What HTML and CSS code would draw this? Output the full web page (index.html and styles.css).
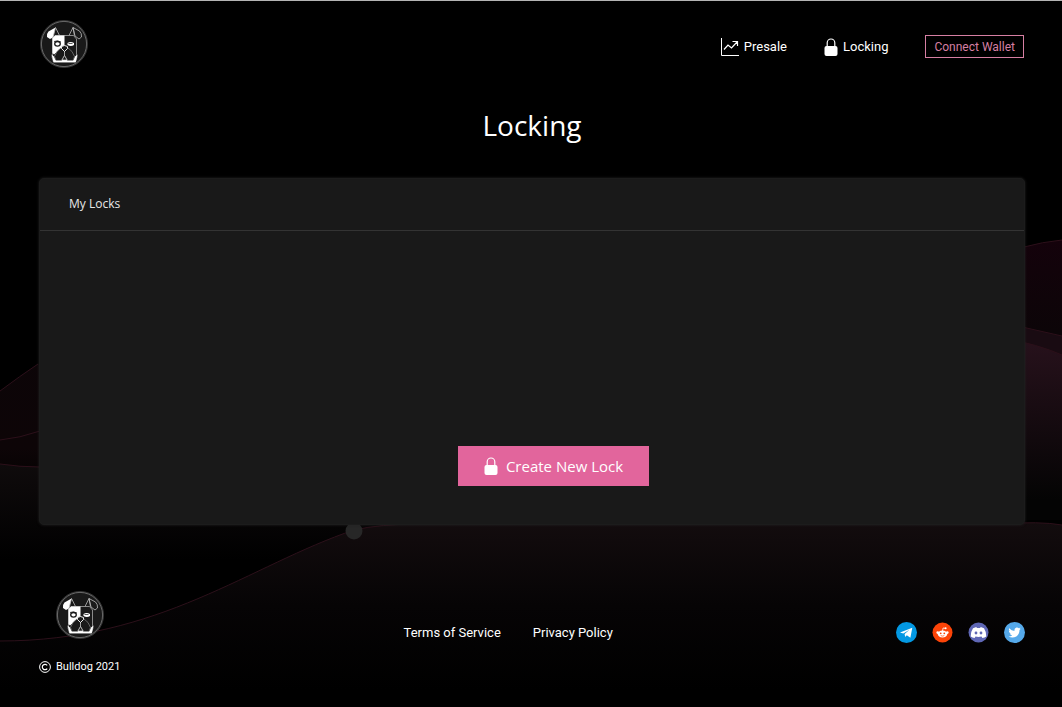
FILE: index.html
```html
<!DOCTYPE html>
<html lang="en">
<head>
  <meta charset="UTF-8">
  <meta name="viewport" content="width=device-width, initial-scale=1">
  <title>Bulldog - Locking</title>
  <link rel="stylesheet" href="styles.css">
</head>
<body>
<svg width="0" height="0" class="sprite" aria-hidden="true">
  <symbol id="bulldog" viewBox="0 0 48 48">
    <circle cx="24" cy="24" r="23.600" fill="#191919" stroke="#3c3c3c" stroke-width=".8"/>
    <circle cx="24" cy="24" r="22.600" fill="none" stroke="#a0a0a0" stroke-width=".6"/>
    <!-- ears -->
    <path d="M15.500 7.500 8.500 11.500Q6.500 13.500 7 17l3 2 3-1.500z" fill="#fff"/>
    <path d="M15.500 7.500 19.500 15.500M15.500 7.500 13 17.500" fill="none" stroke="#bbb" stroke-width=".8"/>
    <path d="M33 7.500 29 15.500M33 7.500l6.500 3.500q2.500 2.500 2 6l-2.500 2-4-3zM33 7.500l1.500 8" fill="none" stroke="#bbb" stroke-width=".8"/>
    <!-- head -->
    <path d="M15 15.500h18.500l3 3.500v15l.5 3-1.500 5h-22L12 37l.5-3V18z" fill="#191919" stroke="#bbb" stroke-width=".7"/>
    <path d="M15 15.500h9.500v10l-3 2-4.500 4.500-3 2.500-1.500-1.500V18z" fill="#fff"/>
    <path d="M11.500 34.500 14 36.500 15.500 40H22l2.500-1 2.500 1h6.500l1.500-3.500 2.500-2-.8 3.500-1 4.200H13.500L12.500 38z" fill="#fff"/>
    <!-- jowls and nose -->
    <path d="M21.500 27.500Q16 31 14.500 36.500l1.500 4h5.500l3-5 3 5h5.500l1.500-4Q33 31 27.500 27.500" fill="#191919" stroke="#999" stroke-width=".6"/>
    <path d="M24.500 31v4.500l-2.500 4.500h5l-2.500-4.500" fill="#191919" stroke="#ddd" stroke-width=".7"/>
    <path d="M21.500 26.500q3-2 6 0v2L24.500 31.500 21.500 28.500z" fill="#191919" stroke="#fff" stroke-width=".9"/>
    <!-- eyes -->
    <ellipse cx="17.500" cy="23.800" rx="2.800" ry="2.300" fill="#fff" stroke="#191919" stroke-width="1.300"/>
    <path d="M14 21.500q3.500-1.500 7 .5" fill="none" stroke="#191919" stroke-width=".8"/>
    <path d="M27.500 23q3-2 6.500 0v2q-3 2-6.500 0z" fill="#fff"/>
    <path d="M28.500 23.500h4" stroke="#191919" stroke-width=".7"/>
  </symbol>
  <symbol id="lock" viewBox="0 0 14 18">
    <path d="M3.200 9V4.800a3.800 3.800 0 0 1 7.600 0V9" fill="none" stroke="currentColor" stroke-width="1.200"/>
    <rect x=".5" y="8" width="13" height="10" rx="2" fill="currentColor"/>
  </symbol>
</svg>

<!-- chart waves behind the page -->
<svg class="waves" viewBox="0 0 1062 707" preserveAspectRatio="none" aria-hidden="true">
  <defs>
    <linearGradient id="far" gradientUnits="userSpaceOnUse" x1="0" y1="240" x2="0" y2="500">
      <stop offset="0" stop-color="#14020b"/>
      <stop offset=".35" stop-color="#0c0508"/>
      <stop offset=".8" stop-color="#0d0507"/>
      <stop offset="1" stop-color="#000"/>
    </linearGradient>
    <linearGradient id="right" gradientUnits="userSpaceOnUse" x1="0" y1="345" x2="0" y2="500">
      <stop offset="0" stop-color="#26111b"/>
      <stop offset="1" stop-color="#040404"/>
    </linearGradient>
    <linearGradient id="left" gradientUnits="userSpaceOnUse" x1="0" y1="464" x2="0" y2="560">
      <stop offset="0" stop-color="#0f0b0c"/>
      <stop offset="1" stop-color="#000"/>
    </linearGradient>
    <linearGradient id="near" gradientUnits="userSpaceOnUse" x1="0" y1="522" x2="0" y2="690">
      <stop offset="0" stop-color="#130c0e"/>
      <stop offset=".5" stop-color="#060405"/>
      <stop offset="1" stop-color="#000"/>
    </linearGradient>
  </defs>
  <path d="M0 391Q20 376 38 364C300 200 560 500 1024 247Q1042 242 1062 240V540H0z" fill="url(#far)"/>
  <path d="M0 391Q20 376 38 364M1024 247Q1042 242 1062 240" class="line"/>
  <path d="M1000 322 1062 336V500H1000z" fill="#190b12"/>
  <path d="M0 440Q20 438 40 431M1000 322 1062 336" class="line"/>
  <path d="M1000 337Q1040 345 1062 355V520H1000z" fill="url(#right)"/>
  <path d="M1000 337Q1040 345 1062 355" class="line"/>
  <path d="M0 464Q20 467 40 467H600V580H0z" fill="url(#left)"/>
  <path d="M0 464Q20 467 40 467" class="line"/>
  <path d="M0 641C160 641 250 565 354 530Q380 524 420 524H1000Q1040 521 1062 525V707H0z" fill="url(#near)"/>
  <path d="M0 641C160 641 250 565 354 530Q380 524 420 524H1000Q1040 521 1062 525" class="line"/>
  <circle cx="354" cy="531" r="8.500" fill="#272727"/>
</svg>

<div class="page">
  <header class="header">
    <a href="#" class="logo" aria-label="Bulldog"><svg><use href="#bulldog"/></svg></a>
    <nav class="nav">
      <a href="#">
        <svg class="chart-icon" viewBox="0 0 18 18" fill="none" stroke="currentColor"><path d="M.5 0v17.500H18" /><path d="m3 11.500 4-4.500 3.500 3L16 4M11.500 3.500H16.500V8" stroke-width="1.200"/></svg>
        Presale
      </a>
      <a href="#"><svg class="lock-icon"><use href="#lock"/></svg>Locking</a>
      <button type="button" class="connect">Connect Wallet</button>
    </nav>
  </header>

  <main>
    <h1>Locking</h1>
    <section class="card">
      <h2>My Locks</h2>
      <div class="card-body">
        <button type="button" class="create"><svg class="lock-icon"><use href="#lock"/></svg>Create New Lock</button>
      </div>
    </section>
  </main>

  <footer class="footer">
    <div class="brand">
      <a href="#" class="logo" aria-label="Bulldog"><svg><use href="#bulldog"/></svg></a>
      <p>
        <svg class="copy-icon" viewBox="0 0 12 12" fill="none" stroke="currentColor"><circle cx="6" cy="6" r="5.400"/><path d="M8.200 4.400a2.700 2.700 0 1 0 0 3.200" stroke-width="1.200"/></svg>
        Bulldog 2021
      </p>
    </div>
    <div class="links">
      <a href="#">Terms of Service</a>
      <a href="#">Privacy Policy</a>
    </div>
    <div class="social">
      <a href="#" aria-label="Telegram">
        <svg viewBox="0 0 21 21"><circle cx="10.500" cy="10.500" r="10.500" fill="#0398e3"/><path d="M4 10.400 16.300 5.800 14.400 15.800 10.800 13.200 9.200 15 8.600 12 13.500 7.700 7.300 11.600z" fill="#fff"/></svg>
      </a>
      <a href="#" aria-label="Reddit">
        <svg viewBox="0 0 21 21"><circle cx="10.500" cy="10.500" r="10" fill="#fc4408"/><g fill="#fff"><ellipse cx="10.500" cy="12" rx="4.800" ry="3.400"/><circle cx="5.700" cy="10.600" r="1.300"/><circle cx="15.300" cy="10.600" r="1.300"/><circle cx="13.600" cy="6.300" r="1"/></g><path d="m10.500 9 .6-3 2.400.4" fill="none" stroke="#fff" stroke-width=".8"/><circle cx="8.700" cy="11.300" r=".9" fill="#fc4408"/><circle cx="12.300" cy="11.300" r=".9" fill="#fc4408"/><path d="M8.700 13.600q1.800 1 3.600 0" fill="none" stroke="#fc4408" stroke-width=".7"/></svg>
      </a>
      <a href="#" aria-label="Discord">
        <svg viewBox="0 0 21 21"><circle cx="10.500" cy="10.500" r="10" fill="#5f67b5"/><path d="M5 6.200 8.300 5l.6 1h3.200l.6-1L16 6.200q2.600 4 2.300 8.200-1.700 1.400-3.900 1.700l-.9-1.500q-3 .8-6 0l-.9 1.500q-2.200-.3-3.900-1.700Q2.400 10.200 5 6.200z" fill="#fff"/><circle cx="8" cy="11" r="1.400" fill="#5f67b5"/><circle cx="13" cy="11" r="1.400" fill="#5f67b5"/></svg>
      </a>
      <a href="#" aria-label="Twitter">
        <svg viewBox="0 0 21 21"><circle cx="10.500" cy="10.500" r="10.500" fill="#55a9ea"/><path d="M5.200 6.200q2.300 2.600 5.300 2.700-.5-2.800 2-3.400 1.400-.2 2.300.7l1.700-.6-1 1.500 1.300-.3-1.300 1.300q0 4.200-3.200 6.400-3.800 2.200-7.800 0 2.300.1 3.700-1.200-1.900-.1-2.400-1.800h1.100q-2-.6-2.100-2.700l1.100.3Q4.300 7.800 5.200 6.200z" fill="#fff"/></svg>
      </a>
    </div>
  </footer>
</div>
</body>
</html>
```

FILE: styles.css
```css
* {
  margin: 0;
  padding: 0;
  box-sizing: border-box;
}
body {
  position: relative;
  min-height: 100vh;
  background: #000;
  border-top: 1px solid #b4b4b4;
  color: #fff;
  font-family: Roboto, "Liberation Sans", sans-serif;
  font-size: 13px;
  overflow-x: hidden;
}
a {
  color: #fff;
  text-decoration: none;
}
button {
  cursor: pointer;
}
svg {
  display: block;
}
.sprite {
  position: absolute;
}
.waves {
  position: absolute;
  top: -1px;
  left: 0;
  width: 100%;
  height: 100vh;
}
.line {
  fill: none;
  stroke: #2c101a;
}
.page {
  position: relative;
  padding: 19px 37px 34px 39px;
}

/* header */
.header {
  display: flex;
  justify-content: space-between;
  align-items: center;
  padding: 0 1px;
}
.logo svg {
  width: 48px;
  height: 48px;
}
.nav {
  display: flex;
  align-items: center;
  gap: 37px;
  padding-top: 5px;
}
.nav a {
  display: flex;
  align-items: center;
  gap: 5px;
}
.chart-icon {
  width: 18px;
  height: 18px;
}
.lock-icon {
  width: 14px;
  height: 18px;
}
.connect {
  height: 23px;
  padding: 0 8px;
  background: transparent;
  border: 1px solid #d67fa3;
  color: #d67fa3;
  font-family: inherit;
  font-size: 12px;
}

/* locks */
h1 {
  margin-top: 37px;
  font-family: "Open Sans", "Noto Sans", sans-serif;
  font-size: 28px;
  font-weight: 400;
  line-height: 40px;
  text-align: center;
}
.card {
  margin-top: 33px;
  background: #191919;
  border: 1px solid #1c1c1c;
  border-radius: 5px;
  box-shadow: 0 0 3px #222;
}
.card h2 {
  height: 52px;
  padding-left: 29px;
  border-bottom: 1px solid #333;
  font-family: "Open Sans", "Noto Sans", sans-serif;
  font-size: 12px;
  font-weight: 400;
  line-height: 50px;
  color: #e8e8e8;
}
.card-body {
  display: flex;
  justify-content: center;
  align-items: flex-end;
  height: 293px;
  padding: 0 0 38px 43px;
}
.create {
  display: flex;
  justify-content: center;
  align-items: center;
  gap: 8px;
  height: 40px;
  padding: 0 26px;
  background: #e2659c;
  border: 0;
  color: #fff;
  font-family: "Open Sans", "Noto Sans", sans-serif;
  font-size: 15px;
  font-weight: 400;
}

/* footer */
.footer {
  display: flex;
  justify-content: space-between;
  align-items: center;
  margin-top: 66px;
}
.brand {
  display: flex;
  flex-direction: column;
  align-items: center;
  gap: 21px;
}
.brand p {
  display: flex;
  align-items: center;
  gap: 5px;
  font-size: 11px;
  line-height: 14px;
}
.copy-icon {
  width: 12px;
  height: 12px;
}
.links {
  display: flex;
  gap: 32px;
}
.social {
  display: flex;
  gap: 15px;
}
.social svg {
  width: 21px;
  height: 21px;
}
```
